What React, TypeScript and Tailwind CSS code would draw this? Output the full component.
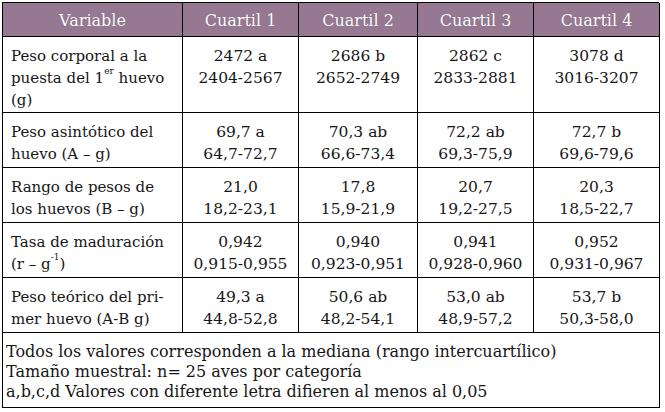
import React from 'react'

const font = { fontFamily: '"DejaVu Serif", serif' }

const rows: { label: React.ReactNode; values: [string, string][] }[] = [
  {
    label: (
      <>
        Peso corporal a la
        <br />
        puesta del 1<sup className="text-[9px] align-[5px]">er</sup> huevo
        <br />
        (g)
      </>
    ),
    values: [
      ['2472 a', '2404-2567'],
      ['2686 b', '2652-2749'],
      ['2862 c', '2833-2881'],
      ['3078 d', '3016-3207'],
    ],
  },
  {
    label: (
      <>
        Peso asintótico del
        <br />
        huevo (A – g)
      </>
    ),
    values: [
      ['69,7 a', '64,7-72,7'],
      ['70,3 ab', '66,6-73,4'],
      ['72,2 ab', '69,3-75,9'],
      ['72,7 b', '69,6-79,6'],
    ],
  },
  {
    label: (
      <>
        Rango de pesos de
        <br />
        los huevos (B – g)
      </>
    ),
    values: [
      ['21,0', '18,2-23,1'],
      ['17,8', '15,9-21,9'],
      ['20,7', '19,2-27,5'],
      ['20,3', '18,5-22,7'],
    ],
  },
  {
    label: (
      <>
        Tasa de maduración
        <br />
        (r – g<sup className="text-[9px] align-[5px]">-1</sup>)
      </>
    ),
    values: [
      ['0,942', '0,915-0,955'],
      ['0,940', '0,923-0,951'],
      ['0,941', '0,928-0,960'],
      ['0,952', '0,931-0,967'],
    ],
  },
  {
    label: (
      <>
        Peso teórico del pri-
        <br />
        mer huevo (A-B g)
      </>
    ),
    values: [
      ['49,3 a', '44,8-52,8'],
      ['50,6 ab', '48,2-54,1'],
      ['53,0 ab', '48,9-57,2'],
      ['53,7 b', '50,3-58,0'],
    ],
  },
]

const headers = ['Variable', 'Cuartil 1', 'Cuartil 2', 'Cuartil 3', 'Cuartil 4']

export default function App() {
  return (
    <div className="w-[665px] h-[412px] bg-white pt-[2px] pl-[2px]" style={font}>
      <div className="w-[657px] grid grid-cols-[180px_116px_119px_116px_126px] border-l border-t border-black leading-[22px] text-[#161616]">
        {headers.map((h) => (
          <div
            key={h}
            className="bg-[#977892] text-white text-[16px] leading-[21px] text-center border-r border-b border-black pt-[7px] pb-[5px] [text-shadow:0_0_1px_rgba(0,0,0,0.3)]"
          >
            {h}
          </div>
        ))}

        {rows.map((row, i) => {
          // first row has three lines, a pixel less padding below
          const pad = i === 0 ? 'pt-[8px] pb-[1px]' : 'pt-[8px] pb-[2px]'
          return (
            <React.Fragment key={i}>
              <div className={`border-r border-b border-black pl-[8px] text-[15px] whitespace-nowrap ${pad}`}>
                {row.label}
              </div>
              {row.values.map(([median, range], j) => (
                <div
                  key={j}
                  className={`border-r border-b border-black text-center text-[15.5px] ${pad}`}
                >
                  {median}
                  <br />
                  {range}
                </div>
              ))}
            </React.Fragment>
          )
        })}

        <div className="col-span-5 border-r border-b border-black pl-[3px] pt-[9px] pb-[5px] text-[16px] leading-[20px]">
          Todos los valores corresponden a la mediana (rango intercuartílico)
          <br />
          Tamaño muestral: n= 25 aves por categoría
          <br />
          a,b,c,d Valores con diferente letra difieren al menos al 0,05
        </div>
      </div>
    </div>
  )
}
